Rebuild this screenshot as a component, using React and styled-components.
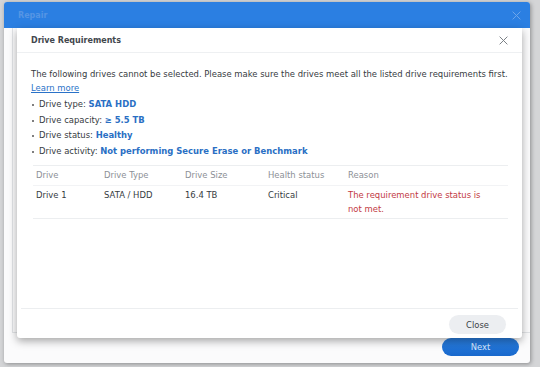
import React from 'react';
import styled, { createGlobalStyle } from 'styled-components';

const GlobalStyle = createGlobalStyle`
  html, body {
    margin: 0;
    padding: 0;
    background: #d4d5d7;
  }
  body {
    font-family: 'DejaVu Sans', Verdana, sans-serif;
    font-size: 8.45px;
    color: #363b41;
  }
`;

const requirements = [
  { label: 'Drive type:', value: 'SATA HDD' },
  { label: 'Drive capacity:', value: '≥ 5.5 TB' },
  { label: 'Drive status:', value: 'Healthy' },
  { label: 'Drive activity:', value: 'Not performing Secure Erase or Benchmark' },
];

const columns = [
  { title: 'Drive', width: 68 },
  { title: 'Drive Type', width: 81 },
  { title: 'Drive Size', width: 83 },
  { title: 'Health status', width: 80 },
  { title: 'Reason', width: 163 },
];

const drives = [
  {
    name: 'Drive 1',
    type: 'SATA / HDD',
    size: '16.4 TB',
    health: 'Critical',
    reason: 'The requirement drive status is not met.',
  },
];

function CloseIcon({ size = 9, color = '#7a7f85' }) {
  return (
    <svg width={size} height={size} viewBox="0 0 10 10">
      <path d="M1 1 L9 9 M9 1 L1 9" stroke={color} strokeWidth="1.1" strokeLinecap="round" />
    </svg>
  );
}

function App() {
  return (
    <>
      <GlobalStyle />
      <Page>
        <Window>
          <TitleBar>
            <WindowTitle>Repair</WindowTitle>
            <CloseIcon size={9} color="#6ea6ea" />
          </TitleBar>
          <WindowBody>
            <BodyArea />
            <WindowFooter>
              <NextButton>Next</NextButton>
            </WindowFooter>

            <Dialog>
              <DialogHeader>
                <DialogTitle>Drive Requirements</DialogTitle>
                <CloseIcon />
              </DialogHeader>
              <DialogBody>
                <Intro>
                  The following drives cannot be selected. Please make sure the drives meet all the
                  listed drive requirements first.
                </Intro>
                <LearnMore href="#">Learn more</LearnMore>
                <ReqList>
                  {requirements.map((r) => (
                    <ReqItem key={r.label}>
                      {r.label} <Strong>{r.value}</Strong>
                    </ReqItem>
                  ))}
                </ReqList>
                <Table>
                  <colgroup>
                    {columns.map((c) => (
                      <col key={c.title} style={{ width: c.width }} />
                    ))}
                  </colgroup>
                  <thead>
                    <tr>
                      {columns.map((c) => (
                        <Th key={c.title}>{c.title}</Th>
                      ))}
                    </tr>
                  </thead>
                  <tbody>
                    {drives.map((d) => (
                      <tr key={d.name}>
                        <Td>{d.name}</Td>
                        <Td>{d.type}</Td>
                        <Td>{d.size}</Td>
                        <Td>{d.health}</Td>
                        <Td $error>{d.reason}</Td>
                      </tr>
                    ))}
                  </tbody>
                </Table>
              </DialogBody>
              <DialogFooter>
                <CloseButton>Close</CloseButton>
              </DialogFooter>
            </Dialog>
          </WindowBody>
        </Window>
      </Page>
    </>
  );
}

export default App;

const Page = styled.div`
  width: 540px;
  height: 367px;
  box-sizing: border-box;
  padding: 2px 10px 4px 4px;
  display: flex;
`;

const Window = styled.div`
  flex: 1;
  display: flex;
  flex-direction: column;
  background: #fbfbfc;
  border-radius: 3px;
  box-shadow: 1px 1px 4px rgba(0, 0, 0, 0.35);
  overflow: hidden;
`;

const TitleBar = styled.div`
  height: 26px;
  flex: none;
  display: flex;
  align-items: center;
  justify-content: space-between;
  padding: 0 9px 0 14px;
  background: #2b7fe2;
`;

const WindowTitle = styled.span`
  color: #5595e4;
  font-weight: bold;
  font-size: 8px;
`;

const WindowBody = styled.div`
  flex: 1;
  display: flex;
  flex-direction: column;
  position: relative;
`;

const BodyArea = styled.div`
  flex: 1;
  margin-left: 8px;
  border-left: 1px solid #e1e3e6;
  border-bottom: 1px solid #e1e3e6;
  margin-bottom: 5px;
`;

const WindowFooter = styled.div`
  height: 25px;
  display: flex;
  justify-content: flex-end;
  align-items: flex-start;
  padding: 0 11px 0 0;
`;

const NextButton = styled.button`
  width: 77px;
  height: 18px;
  border: none;
  border-radius: 9px;
  background: linear-gradient(#2a7fe0, #1868cc);
  color: #d8e9ff;
  font-family: inherit;
  font-size: 8.4px;
  padding: 0;
`;

const Dialog = styled.div`
  position: absolute;
  left: 13px;
  top: 0;
  width: 505px;
  height: 310px;
  background: #fff;
  border-radius: 0 0 3px 3px;
  box-shadow: 0 3px 8px rgba(0, 0, 0, 0.35);
  display: flex;
  flex-direction: column;
`;

const DialogHeader = styled.div`
  height: 24px;
  flex: none;
  display: flex;
  align-items: center;
  justify-content: space-between;
  padding: 0 14px;
  border-bottom: 1px solid #eef0f2;
`;

const DialogTitle = styled.span`
  font-weight: bold;
  font-size: 8px;
  color: #42474d;
`;

const DialogBody = styled.div`
  flex: 1;
  padding: 14px 14px 0 14px;
  line-height: 14px;
`;

const Intro = styled.div``;

const LearnMore = styled.a`
  color: #2a72c8;
  text-decoration: underline;
  display: inline-block;
`;

const ReqList = styled.ul`
  margin: 2px 0 0;
  padding: 0 0 0 8px;
  list-style: none;
`;

const ReqItem = styled.li`
  line-height: 15.5px;
  position: relative;
  &::before {
    content: '';
    position: absolute;
    left: -7px;
    top: 7px;
    width: 2px;
    height: 2px;
    border-radius: 1px;
    background: #555;
  }
`;

const Strong = styled.span`
  color: #2a6fc4;
  font-weight: bold;
`;

const Table = styled.table`
  width: 475px;
  table-layout: fixed;
  margin: 6px 0 0 2px;
  border-collapse: collapse;
  border-top: 1px solid #eceef0;
  border-bottom: 1px solid #eceef0;
`;

const Th = styled.th`
  text-align: left;
  font-weight: normal;
  color: #8c9096;
  padding: 3px 3px 4px;
  line-height: 12px;
  border-bottom: 1px solid #f2f3f5;
`;

const Td = styled.td`
  vertical-align: top;
  padding: 2px ${(p) => (p.$error ? '24px' : '3px')} 2px 3px;
  line-height: 14px;
  color: ${(p) => (p.$error ? '#c23a44' : '#363b41')};
`;

const DialogFooter = styled.div`
  height: 30px;
  flex: none;
  display: flex;
  justify-content: flex-end;
  align-items: flex-start;
  padding: 6px 12px 0;
  box-sizing: border-box;
  border-top: 1px solid #eceef0;
  margin: 0 4px;
`;

const CloseButton = styled.button`
  width: 57px;
  height: 19px;
  border: none;
  border-radius: 10px;
  background: #eceef1;
  color: #3a3f45;
  font-family: inherit;
  font-size: 8.4px;
  padding: 0;
`;
